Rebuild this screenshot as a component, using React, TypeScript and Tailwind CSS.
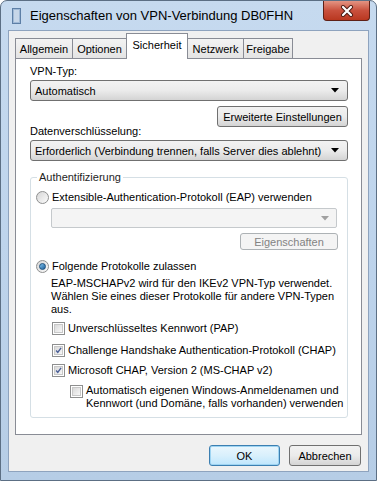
import React from 'react';

const face =
  'rounded-[3px] border border-[#707070] bg-gradient-to-b from-[#f2f2f2] via-[#ebebeb] to-[#d4d4d4] text-black';

function Arrow({ disabled }: { disabled?: boolean }) {
  return (
    <svg width="8" height="5" viewBox="0 0 8 5" className="shrink-0">
      <path d="M0 0 L8 0 L4 4.5 Z" fill={disabled ? '#a0a0a0' : '#000'} />
    </svg>
  );
}

function Combo({ text, className = '' }: { text: string; className?: string }) {
  return (
    <div className={`${face} flex h-[21px] items-center justify-between pl-[4px] pr-[8px] ${className}`}>
      <span>{text}</span>
      <Arrow />
    </div>
  );
}

function Radio({ checked }: { checked?: boolean }) {
  return (
    <span className="flex h-[13px] w-[13px] shrink-0 items-center justify-center rounded-full border border-[#8e8f8f] bg-gradient-to-br from-[#d6d6d6] to-[#fbfbfb]">
      {checked && (
        <span className="h-[7px] w-[7px] rounded-full border border-[#1c4f7c] bg-gradient-to-br from-[#7fc3f0] to-[#1b5f98]" />
      )}
    </span>
  );
}

function Check({ checked }: { checked?: boolean }) {
  return (
    <span className="flex h-[13px] w-[13px] shrink-0 items-center justify-center border border-[#8e8f8f] bg-white">
      <span className="flex h-[9px] w-[9px] items-center justify-center border border-[#c8c8c8] bg-gradient-to-br from-[#d9d9d9] to-[#f7f7f7]">
        {checked && (
          <svg width="9" height="9" viewBox="0 0 9 9">
            <path d="M1.5 4.5 L3.6 7 L7.8 1.2" fill="none" stroke="#4a5f97" strokeWidth="1.8" />
          </svg>
        )}
      </span>
    </span>
  );
}

const tabs = [
  { label: 'Allgemein', w: 'w-[58px]' },
  { label: 'Optionen', w: 'w-[55px]' },
  { label: 'Sicherheit', w: 'w-[62px]', active: true },
  { label: 'Netzwerk', w: 'w-[57px]' },
  { label: 'Freigabe', w: 'w-[50px]' },
];

export default function App() {
  return (
    <div className="flex h-[481px] w-[377px] flex-col whitespace-nowrap rounded-t-[7px] border border-[#5c6f84] bg-gradient-to-b from-[#c6daef] via-[#bed4ec] to-[#b6cde6] font-['Liberation_Sans',Arial,sans-serif] text-[11px] leading-[14px] text-black">
      {/* title bar */}
      <div className="flex h-[29px] shrink-0 items-start justify-between">
        <div className="flex items-start">
          <svg width="9" height="16" viewBox="0 0 9 16" className="ml-[11px] mt-[7px] shrink-0">
            <rect x="0.5" y="0.5" width="8" height="15" fill="#9fb9d6" stroke="#5d7fa6" />
            <path d="M2 3h5M2 5h5M2 7h5M2 9h5M2 11h5M2 13h5" stroke="#eef4fb" strokeWidth="1" />
          </svg>
          <span className="ml-[9px] mt-[6px] text-[13px] leading-[17px]">Eigenschaften von VPN-Verbindung DB0FHN</span>
        </div>
        <div className="mr-[6px] flex h-[20px] min-w-[47px] flex-none items-center justify-center rounded-b-[4px] border border-t-0 border-[#5e2016] bg-[#c9503d] bg-gradient-to-b from-[#e39483] via-[#c9503d] to-[#b9371f]">
          <svg width="14" height="12" viewBox="0 0 14 12">
            <path d="M3 2 L11 10 M11 2 L3 10" stroke="#4a1a12" strokeWidth="4" strokeLinecap="round" />
            <path d="M3 2 L11 10 M11 2 L3 10" stroke="#fff" strokeWidth="2.2" strokeLinecap="round" />
          </svg>
        </div>
      </div>

      {/* client area */}
      <div className="mx-[7px] mb-[8px] flex flex-1 flex-col border border-[#8ea3be] bg-[#f0f0f0]">
        {/* tabs */}
        <div className="ml-[6px] mt-[2px] flex h-[25px] items-end">
          {tabs.map((t) =>
            t.active ? (
              <div
                key={t.label}
                className={`${t.w} relative z-10 -mb-px -ml-px flex h-[26px] items-start justify-center border border-b-0 border-[#898c95] bg-white pt-[4px]`}
              >
                {t.label}
              </div>
            ) : (
              <div
                key={t.label}
                className={`${t.w} -ml-px flex h-[20px] items-center justify-center border border-b-0 border-[#898c95] bg-gradient-to-b from-[#f3f3f3] to-[#e4e4e4] first:ml-0`}
              >
                {t.label}
              </div>
            )
          )}
        </div>

        {/* tab panel */}
        <div className="ml-[6px] flex h-[377px] w-[347px] flex-col border border-[#898c95] bg-white pl-[14px] pr-[13px]">
          <div className="mt-[5px]">VPN-Typ:</div>
          <Combo text="Automatisch" className="mt-[2px]" />
          <div className="mt-[5px] flex justify-end">
            <div className={`${face} flex h-[21px] w-[131px] items-center justify-center`}>Erweiterte Einstellungen</div>
          </div>
          <div className="-mt-[3px]">Datenverschlüsselung:</div>
          <Combo text="Erforderlich (Verbindung trennen, falls Server dies ablehnt)" className="mt-[2px]" />

          <fieldset className="mt-[9px] rounded-[3px] border border-[#d5dfe5] p-0 pb-[7px]">
            <legend className="ml-[6px] px-[2px] text-[#1e1e1e]">Authentifizierung</legend>
            <div className="ml-[5px] mt-[6px] flex items-center gap-[3px]">
              <Radio />
              <span>Extensible-Authentication-Protokoll (EAP) verwenden</span>
            </div>
            <div className="ml-[20px] mr-[10px] mt-[4px] flex h-[20px] items-center justify-end rounded-[2px] border border-[#c5c9cc] bg-[#f4f4f4] pr-[7px]">
              <Arrow disabled />
            </div>
            <div className="mr-[9px] mt-[5px] flex justify-end">
              <div className="flex h-[17px] w-[98px] items-center justify-center rounded-[3px] border border-[#adb2b5] bg-[#f4f4f4] text-[#838383]">
                Eigenschaften
              </div>
            </div>
            <div className="ml-[5px] mt-[9px] flex items-center gap-[3px]">
              <Radio checked />
              <span>Folgende Protokolle zulassen</span>
            </div>
            <p className="ml-[20px] mt-[4px] leading-[13px]">
              EAP-MSCHAPv2 wird für den IKEv2 VPN-Typ verwendet.
              <br />
              Wählen Sie eines dieser Protokolle für andere VPN-Typen
              <br />
              aus.
            </p>
            <div className="ml-[21px] mt-[5px] flex items-center gap-[3px]">
              <Check />
              <span>Unverschlüsseltes Kennwort (PAP)</span>
            </div>
            <div className="ml-[21px] mt-[8px] flex items-center gap-[3px]">
              <Check checked />
              <span>Challenge Handshake Authentication-Protokoll (CHAP)</span>
            </div>
            <div className="ml-[21px] mt-[6px] flex items-center gap-[3px]">
              <Check checked />
              <span>Microsoft CHAP, Version 2 (MS-CHAP v2)</span>
            </div>
            <div className="ml-[39px] mt-[7px] flex items-start gap-[3px]">
              <span className="mt-[1px]">
                <Check />
              </span>
              <span className="leading-[13px]">
                Automatisch eigenen Windows-Anmeldenamen und
                <br />
                Kennwort (und Domäne, falls vorhanden) verwenden
              </span>
            </div>
          </fieldset>
        </div>

        {/* dialog buttons */}
        <div className="mr-[7px] mt-[10px] flex justify-end gap-[9px]">
          <div className="flex h-[21px] w-[71px] items-center justify-center rounded-[3px] border border-[#3c7fb1] bg-gradient-to-b from-[#eaf6fd] via-[#d9f0fc] to-[#bee6fd] shadow-[inset_0_0_0_1px_#9ed4f2]">
            OK
          </div>
          <div className={`${face} flex h-[21px] w-[72px] items-center justify-center`}>Abbrechen</div>
        </div>
      </div>
    </div>
  );
}
